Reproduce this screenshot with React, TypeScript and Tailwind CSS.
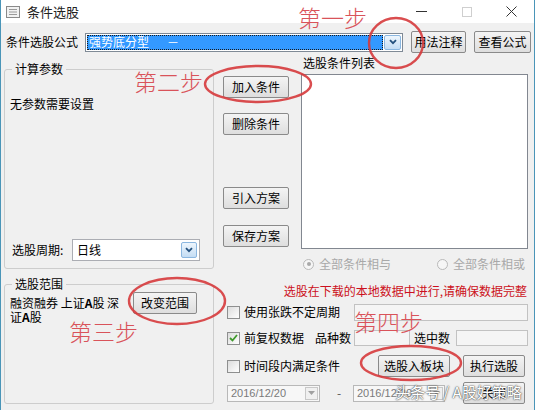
import { FC, ReactNode } from "react";

const Btn: FC<{ children: ReactNode; className?: string }> = ({ children, className = "" }) => (
    <div className={"flex items-center justify-center h-[22px] border border-[#8a8a8a] rounded-[2px] bg-linear-to-b from-[#f4f4f4] to-[#dedede] text-black " + className}>
        {children}
    </div>
)

const DropBtn: FC<{ className?: string }> = ({ className = "" }) => (
    <div className={"flex items-center justify-center border border-[#8bb7e0] rounded-[2px] bg-linear-to-b from-[#eef6fd] to-[#c4ddf4] " + className}>
        <svg width="8" height="6" viewBox="0 0 8 6">
            <path d="M1 1.2 L4 4.2 L7 1.2" stroke="#24517e" strokeWidth="1.8" fill="none" />
        </svg>
    </div>
)

const Check: FC<{ checked?: boolean }> = ({ checked }) => (
    <div className="w-[13px] h-[13px] shrink-0 border border-[#8e8f8f] bg-linear-to-br from-[#dcdcdc] to-white flex items-center justify-center">
        {checked && (
            <svg width="9" height="8" viewBox="0 0 9 8">
                <path d="M1 4 L3.5 6.5 L8 1" stroke="#3f9a2c" strokeWidth="1.8" fill="none" />
            </svg>
        )}
    </div>
)

const Radio: FC<{ dot?: boolean }> = ({ dot }) => (
    <div className="w-[11px] h-[11px] rounded-full border border-[#b9b9b9] bg-[#f6f6f6] flex items-center justify-center">
        {dot && <div className="w-[4px] h-[4px] rounded-full bg-[#a9a9a9]" />}
    </div>
)

const DateBox: FC<{ text: string; className?: string }> = ({ text, className = "" }) => (
    <div className={"h-[17px] flex items-center border border-[#b8b8b8] bg-[#f7f7f7] pl-[3px] pr-[1px] " + className}>
        <span className="flex-1 text-[#7a7a7a] text-[11px] [font-family:'Liberation_Sans',sans-serif]">{text}</span>
        <div className="w-[13px] h-[13px] border border-[#c8c8c8] bg-[#f0f0f0] flex items-center justify-center">
            <svg width="7" height="4" viewBox="0 0 7 4"><path d="M0 0 L7 0 L3.5 4 Z" fill="#a0a0a0" /></svg>
        </div>
    </div>
)

const App: FC = () => {
    return (
        <div className="relative w-[535px] h-[410px] overflow-hidden flex flex-col bg-[#f0f0f0] border-l border-r border-[#4a95b8] text-[12px] leading-[14px] text-black [font-family:'Noto_Sans_CJK_SC','Noto_Sans',sans-serif]">
            {/* title bar */}
            <div className="h-[23px] shrink-0 bg-white flex items-center">
                <svg className="ml-[5px]" width="14" height="12" viewBox="0 0 14 12">
                    <rect x="0.5" y="0.5" width="13" height="11" fill="#f2f2f2" stroke="#8a8a8a" />
                    <path d="M3 3.5 H11 M3 6 H11 M3 8.5 H11" stroke="#9a9a9a" />
                </svg>
                <span className="ml-[7px] text-[13px] text-[#222]">条件选股</span>
                <div className="flex-1" />
                <div className="w-[45px] h-full flex items-center justify-center">
                    <div className="w-[11px] h-[1px] bg-[#333]" />
                </div>
                <div className="w-[45px] h-full flex items-center justify-center">
                    <div className="w-[10px] h-[10px] border border-[#cfcfcf]" />
                </div>
                <div className="w-[45px] h-full flex items-center justify-center">
                    <svg width="11" height="11" viewBox="0 0 11 11">
                        <path d="M0.5 0.5 L10.5 10.5 M10.5 0.5 L0.5 10.5" stroke="#333" strokeWidth="1" />
                    </svg>
                </div>
            </div>

            <div className="flex-1 flex flex-col pl-[3px]">
                {/* formula row */}
                <div className="mt-[8px] h-[22px] flex items-center">
                    <span className="ml-[2px] w-[79px]">条件选股公式</span>
                    <div className="w-[318px] h-[19px] border border-[#7f8a96] bg-white flex items-stretch p-[1px]">
                        <div className="flex-1 bg-[#3399ff] text-white flex items-center pl-[2px] outline-1 outline-dotted outline-[#1a1a1a] -outline-offset-1">
                            强势底分型<span className="ml-[18px]">－</span>
                        </div>
                        <DropBtn className="w-[17px] ml-[1px]" />
                    </div>
                    <Btn className="ml-[8px] w-[55px]">用法注释</Btn>
                    <Btn className="ml-[8px] w-[57px]">查看公式</Btn>
                </div>

                <div className="flex">
                    {/* left column */}
                    <div className="w-[210px] flex flex-col">
                        <fieldset className="mt-[9px] h-[207px] border border-[#cdcdcd] rounded-[3px]">
                            <legend className="ml-[7px] px-[3px] leading-[14px]">计算参数</legend>
                            <div className="h-[191px] flex flex-col">
                                <div className="pl-[5px] mt-[21px]">无参数需要设置</div>
                                <div className="mt-auto mb-[6px] flex items-center">
                                    <span className="ml-[7px] w-[60px]">选股周期:</span>
                                    <div className="w-[128px] h-[22px] border border-[#abadb3] bg-white flex items-stretch p-[2px]">
                                        <span className="flex-1 pl-[2px] flex items-center">日线</span>
                                        <DropBtn className="w-[16px]" />
                                    </div>
                                </div>
                            </div>
                        </fieldset>
                        <fieldset className="mt-[8px] h-[127px] border border-[#cdcdcd] rounded-[3px]">
                            <legend className="ml-[7px] px-[3px] leading-[14px]">选股范围</legend>
                            <div className="flex items-start mt-[1px]">
                                <div className="w-[128px] pl-[5px] mt-[4px] leading-[14px] whitespace-nowrap">
                                    <div>融资融券 上证<span className="font-bold">A</span>股 深</div>
                                    <div>证<span className="font-bold">A</span>股</div>
                                </div>
                                <Btn className="w-[64px]">改变范围</Btn>
                            </div>
                        </fieldset>
                    </div>

                    {/* right area */}
                    <div className="ml-[9px] w-[305px] flex flex-col">
                        <div className="flex h-[196px]">
                            <div className="w-[66px] flex flex-col">
                                <Btn className="mt-[23px] w-[66px]">加入条件</Btn>
                                <Btn className="mt-[15px] w-[66px]">删除条件</Btn>
                                <Btn className="mt-[52px] w-[66px]">引入方案</Btn>
                                <Btn className="mt-[16px] w-[66px]">保存方案</Btn>
                            </div>
                            <div className="ml-[12px] w-[227px] flex flex-col">
                                <span className="ml-[2px] mt-[3px]">选股条件列表</span>
                                <div className="mt-[4px] h-[175px] border border-[#828790] bg-white" />
                            </div>
                        </div>

                        <div className="mt-[7px] h-[16px] flex items-center text-[#a8a8a8]">
                            <div className="ml-[80px] w-[134px] flex items-center">
                                <Radio dot />
                                <span className="ml-[5px]">全部条件相与</span>
                            </div>
                            <Radio />
                            <span className="ml-[5px]">全部条件相或</span>
                        </div>

                        <div className="mt-[12px] h-[14px] text-right pr-[1px] text-[#cc1020]">
                            选股在下载的本地数据中进行,请确保数据完整
                        </div>

                        <div className="mt-[5px] h-[18px] flex items-center">
                            <div className="ml-[4px]"><Check /></div>
                            <span className="ml-[4px]">使用张跌不定周期</span>
                            <div className="ml-auto w-[174px] h-[17px] border border-[#c2c2c2] bg-[#f5f5f5]" />
                        </div>

                        <div className="mt-[8px] h-[18px] flex items-center">
                            <div className="ml-[4px]"><Check checked /></div>
                            <span className="ml-[4px] w-[60px]">前复权数据</span>
                            <span className="ml-[11px]">品种数</span>
                            <div className="ml-[3px] w-[56px] h-[16px] border border-[#c2c2c2] bg-[#f5f5f5]" />
                            <span className="ml-[4px]">选中数</span>
                            <div className="ml-auto w-[72px] h-[16px] border border-[#c2c2c2] bg-[#f5f5f5]" />
                        </div>

                        <div className="mt-[8px] h-[22px] flex items-center">
                            <div className="ml-[4px]"><Check /></div>
                            <span className="ml-[4px]">时间段内满足条件</span>
                            <Btn className="ml-auto w-[72px]">选股入板块</Btn>
                            <Btn className="ml-[13px] mr-[3px] w-[62px]">执行选股</Btn>
                        </div>

                        <div className="mt-[5px] h-[22px] flex items-center">
                            <DateBox className="ml-[4px] w-[93px]" text="2016/12/20" />
                            <span className="ml-[14px] w-[10px] text-center text-[#555]">-</span>
                            <DateBox className="ml-[9px] w-[92px]" text="2016/12/20" />
                            <Btn className="ml-auto mr-[3px] w-[62px]">关闭</Btn>
                        </div>
                    </div>
                </div>
            </div>

            {/* watermark */}
            <div className="absolute left-[394px] top-[382px] text-[15px] leading-[20px] text-white whitespace-nowrap [text-shadow:0_0_2px_#444,0_0_1px_#444]">
                头条号 / A股好策略
            </div>

            {/* red annotations */}
            <svg className="absolute left-0 top-0 pointer-events-none" width="535" height="410" viewBox="0 0 535 410">
                <g fill="none" stroke="#d63a3c" strokeWidth="2.4" opacity="0.9">
                    <ellipse cx="395" cy="43" rx="27" ry="25" />
                    <ellipse cx="257" cy="84" rx="53" ry="18" />
                    <ellipse cx="176" cy="301" rx="48" ry="23" />
                    <ellipse cx="410" cy="363" rx="50" ry="17" />
                </g>
            </svg>
            <div className="absolute left-[297px] top-[4px] text-[23px] leading-[26px] text-[#d9535a] font-light">第一步</div>
            <div className="absolute left-[133px] top-[68px] text-[23px] leading-[26px] text-[#d9535a] font-light">第二步</div>
            <div className="absolute left-[68px] top-[318px] text-[23px] leading-[26px] text-[#d9535a] font-light">第三步</div>
            <div className="absolute left-[353px] top-[308px] text-[23px] leading-[26px] text-[#d9535a] font-light">第四步</div>
        </div>
    )
}

export default App
